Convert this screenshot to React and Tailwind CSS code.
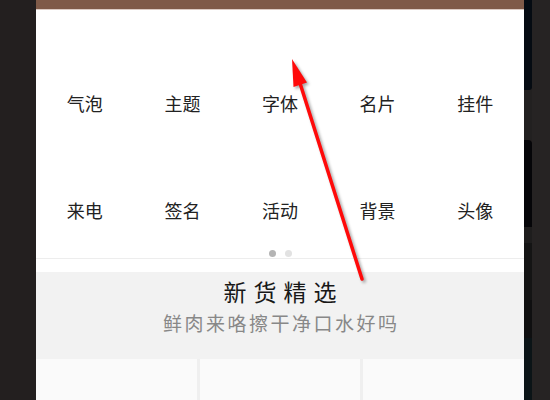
import React from 'react';

const topRow = ['气泡', '主题', '字体', '名片', '挂件'];
const bottomRow = ['来电', '签名', '活动', '背景', '头像'];

const cjk = { fontFamily: '"Noto Sans CJK SC", "Noto Sans", sans-serif' };

const IconRow = ({ items }) => (
  <div className="grid grid-cols-5 h-6">
    {items.map((label) => (
      <div key={label} className="flex items-center justify-center text-[18px] leading-6 text-[#222]">
        {label}
      </div>
    ))}
  </div>
);

// annotation arrow drawn over the screenshot
const Arrow = () => (
  <svg
    className="absolute left-0 top-0 pointer-events-none"
    width="550"
    height="400"
    viewBox="0 0 550 400"
    style={{ filter: 'drop-shadow(2px 2px 1.5px rgba(0,0,0,0.35))' }}
  >
    <line x1="362" y1="279" x2="299" y2="80" stroke="#ff0a0a" strokeWidth="3.5" strokeLinecap="round" />
    <polygon points="292,59 307,82.5 293.5,87" fill="#ff0a0a" />
  </svg>
);

const SideStrip = () => (
  <div className="flex flex-col w-[8px] h-full">
    <div className="h-[90px] bg-[#050b12] rounded-br-[3px]" />
    <div className="h-[50px] bg-[#222020]" />
    <div className="h-[87px] bg-[#050508] rounded-tr-[4px]" />
    <div className="h-[16px] bg-[#1e1d1d]" />
    <div className="h-[57px] bg-[#141414]" />
    <div className="h-[38px] bg-[#0f0f10]" />
    <div className="flex-1 bg-[#0b1417]" />
  </div>
);

export default function App() {
  return (
    <div className="relative flex w-[550px] h-[400px] overflow-hidden bg-[#231f1f]" style={cjk}>
      <div className="w-[36px] shrink-0" />

      <div className="w-[488px] shrink-0 flex flex-col bg-white">
        <div className="h-[9px] bg-[#7f5a48]" />
        <div className="h-px bg-[#dccbc3]" />

        <div className="pt-[81px]">
          <IconRow items={topRow} />
        </div>
        <div className="mt-[83px]">
          <IconRow items={bottomRow} />
        </div>

        <div className="mt-[28px] flex justify-center gap-[9px]">
          <span className="w-[7px] h-[7px] rounded-full bg-[#b4b4b4]" />
          <span className="w-[7px] h-[7px] rounded-full bg-[#e2e2e2]" />
        </div>
        <div className="mt-[1px] h-px bg-[#ededed]" />
        <div className="h-[13px]" />

        <div className="h-[87px] bg-[#f2f2f2] flex flex-col items-center pt-[5px]">
          <div className="text-[23px] leading-[28px] tracking-[7px] pl-[7px] text-[#181818]">新货精选</div>
          <div className="mt-[6px] text-[19px] leading-6 tracking-[2.5px] pl-[2.5px] text-[#888]">
            鲜肉来咯擦干净口水好吗
          </div>
        </div>

        <div className="flex-1 grid grid-cols-3 gap-[3px] bg-[#efefef]">
          <div className="bg-[#fafafa]" />
          <div className="bg-[#fafafa]" />
          <div className="bg-[#fafafa]" />
        </div>
      </div>

      <SideStrip />
      <div className="flex-1 bg-[#262323]" />

      <Arrow />
    </div>
  );
}
